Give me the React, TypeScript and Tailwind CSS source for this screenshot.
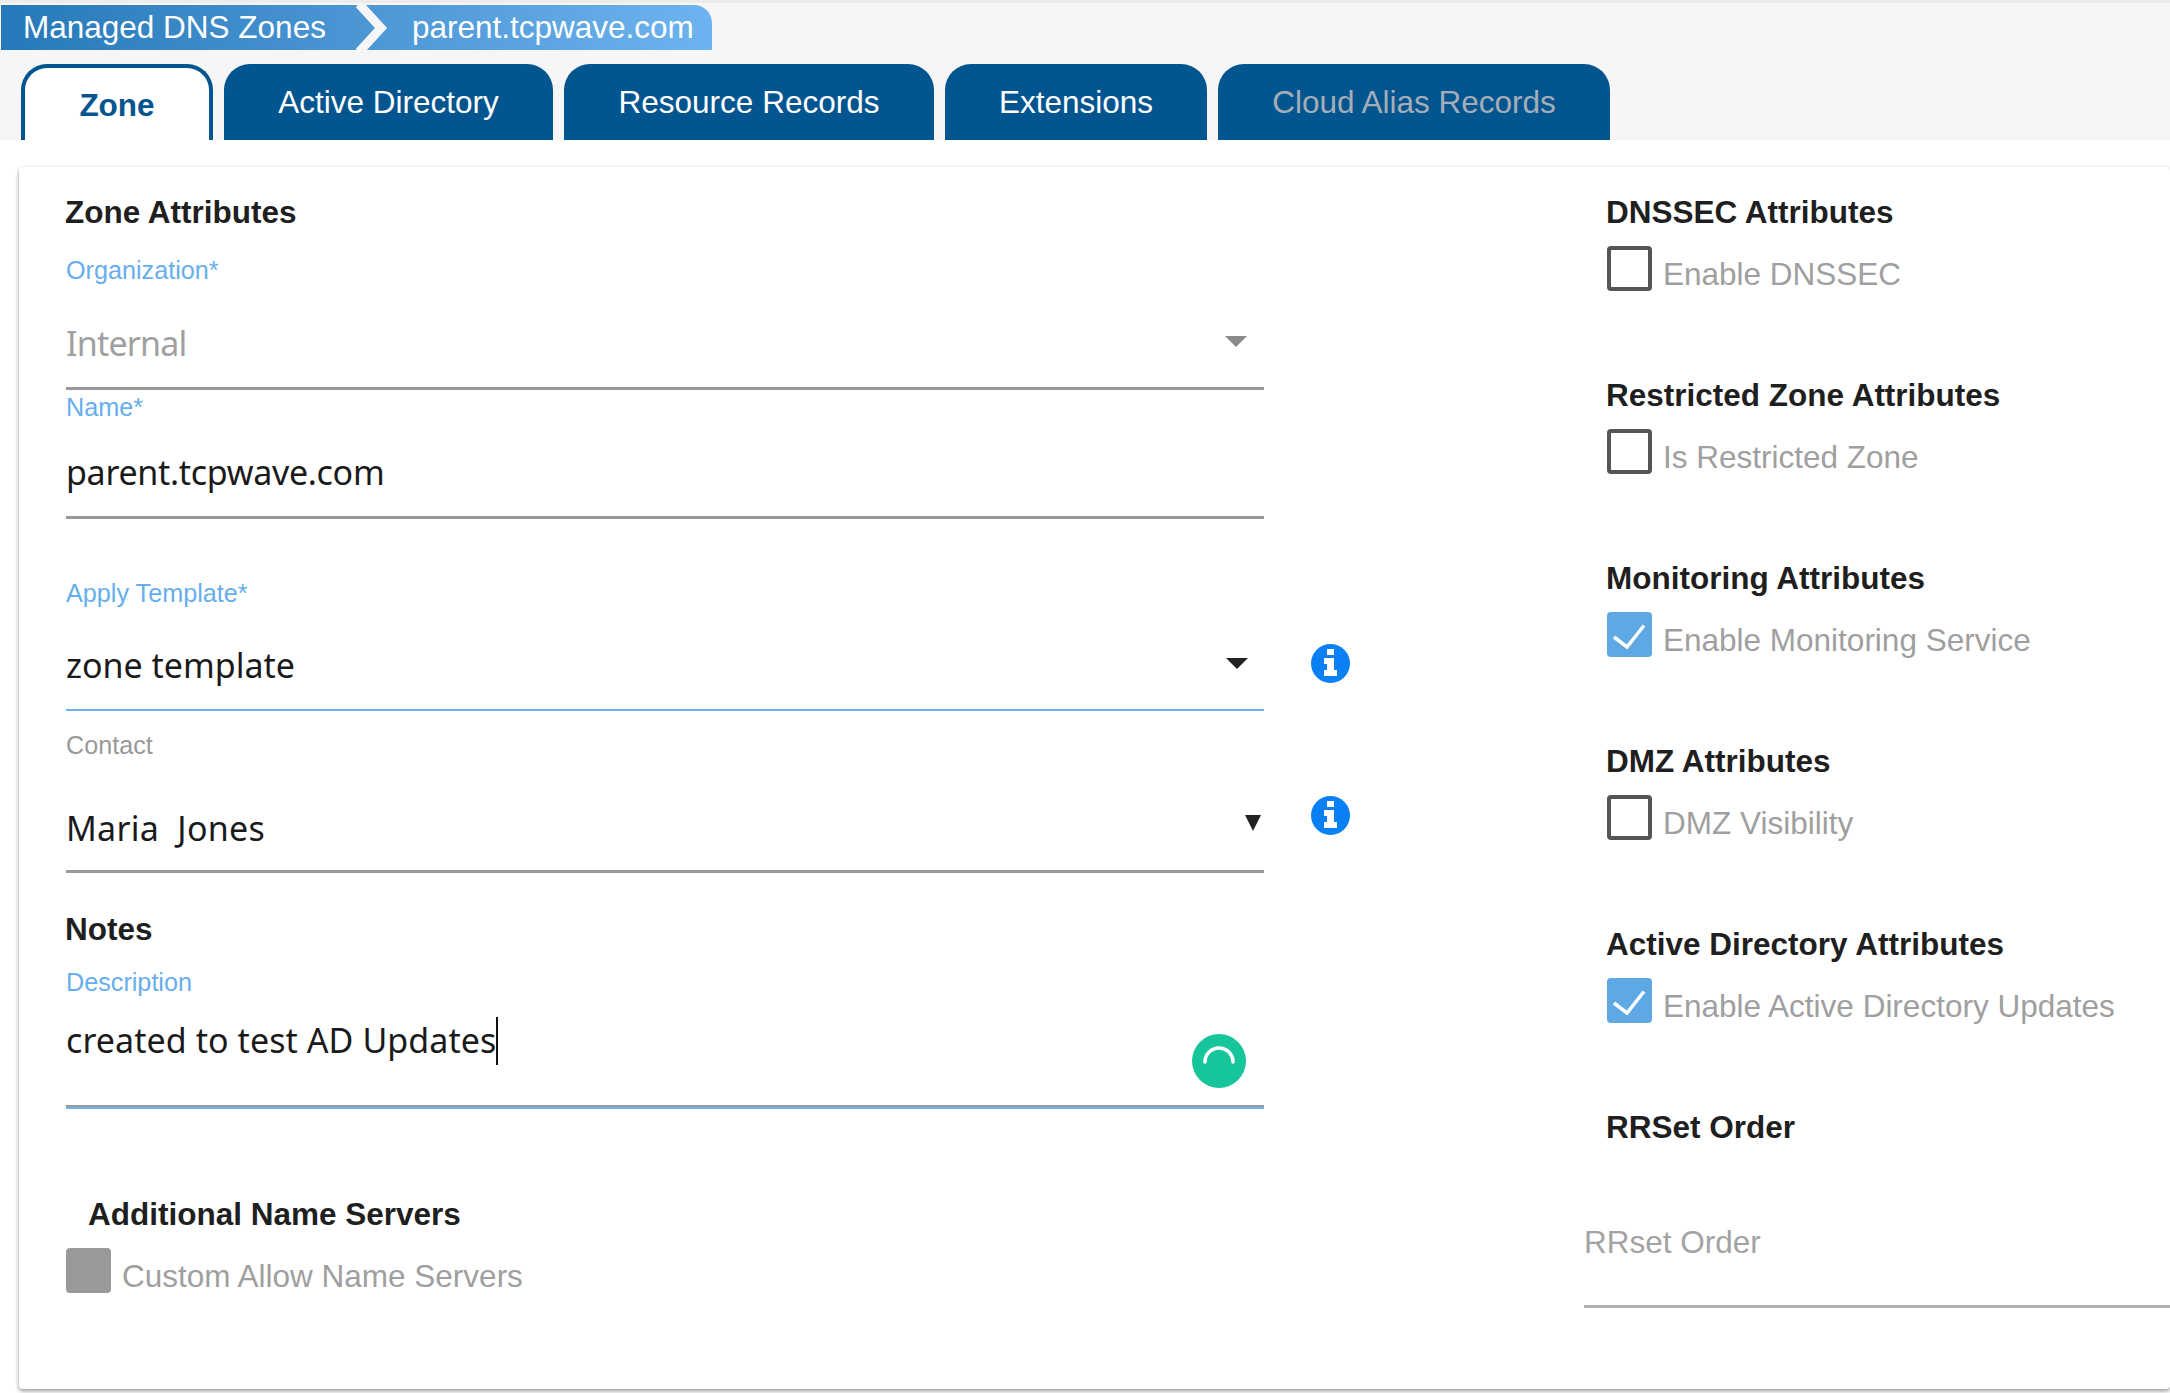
import type { ReactNode } from 'react';

const TABS = [
  { label: 'Active Directory', width: 'w-[329px]', color: 'text-white' },
  { label: 'Resource Records', width: 'w-[370px]', color: 'text-white' },
  { label: 'Extensions', width: 'w-[262px]', color: 'text-white' },
  { label: 'Cloud Alias Records', width: 'w-[392px]', color: 'text-[#a5adb8]' },
];

function Heading({ children, className = '' }: { children: ReactNode; className?: string }) {
  return <h3 className={`h-[36px] text-[31.5px] leading-[36px] font-bold text-[#1f1f1f] ${className}`}>{children}</h3>;
}

function Label({ children, muted = false }: { children: ReactNode; muted?: boolean }) {
  return (
    <label className={`block h-[30px] text-[25.2px] leading-[30px] ${muted ? 'text-[#999999]' : 'text-[#67aeec]'}`}>
      {children}
    </label>
  );
}

function Value({ children, muted = false, className = '' }: { children: ReactNode; muted?: boolean; className?: string }) {
  return (
    <span className={`font-['Noto_Sans',sans-serif] text-[34px] leading-[48px] ${muted ? 'text-[#a0a0a0]' : 'text-[#1a1a1a]'} ${className}`}>
      {children}
    </span>
  );
}

function InfoIcon({ className = '' }: { className?: string }) {
  return (
    <svg viewBox="0 0 39 39" className={`h-[39px] w-[39px] shrink-0 ${className}`}>
      <circle cx="19.5" cy="19.5" r="19.5" fill="#0a80f5" />
      <rect x="16" y="5" width="7" height="6" fill="#fff" />
      <path d="M13 14h10v12h3v6H13v-6h3v-6h-3z" fill="#fff" />
    </svg>
  );
}

function CheckRow({ label, state }: { label: string; state: 'off' | 'on' | 'disabled' }) {
  return (
    <div className="flex h-[45px] items-start">
      {state === 'off' && <span className="h-[45px] w-[45px] shrink-0 rounded-[4px] border-4 border-[#555555]" />}
      {state === 'disabled' && <span className="h-[45px] w-[45px] shrink-0 rounded-[4px] bg-[#999999]" />}
      {state === 'on' && (
        <span className="flex h-[45px] w-[45px] shrink-0 items-center justify-center rounded-[4px] bg-[#5ea8e4]">
          <svg viewBox="0 0 45 45" className="h-[45px] w-[45px]">
            <path d="M7 25l13 10 17-21.500" fill="none" stroke="#fff" strokeWidth="3.500" />
          </svg>
        </span>
      )}
      <span className="ml-[11px] mt-[10px] text-[31.5px] leading-[36px] whitespace-nowrap text-[#9f9f9f]">{label}</span>
    </div>
  );
}

function CheckSection({ title, label, state }: { title: string; label: string; state: 'off' | 'on' }) {
  return (
    <section className="mb-[86px]">
      <Heading className="ml-[22px]">{title}</Heading>
      <div className="ml-[23px] mt-[16px]">
        <CheckRow label={label} state={state} />
      </div>
    </section>
  );
}

export default function App() {
  return (
    <div className="h-[1393px] w-full overflow-hidden bg-white font-['Liberation_Sans',Arial,sans-serif]">
      {/* header strip */}
      <div className="h-[140px] border-t-[3px] border-[#ececec] bg-[#f6f6f6] pt-[2px]">
        <nav className="relative ml-[1px] flex h-[45px] w-[711px] items-center rounded-tr-[18px] bg-gradient-to-r from-[#2579b8] to-[#6db3ef] text-[31.5px] text-white">
          <span className="ml-[22px] whitespace-nowrap">Managed DNS Zones</span>
          <span className="ml-[86px] whitespace-nowrap">parent.tcpwave.com</span>
          <svg viewBox="0 0 34 50" className="absolute left-[354px] top-[-2px] h-[50px] w-[34px]">
            <path d="M4 1l22 24L4 49" fill="none" stroke="#f6f6f6" strokeWidth="9" />
          </svg>
        </nav>
        <div className="mt-[14px] flex h-[76px] pl-[21px]">
          <button className="h-[76px] w-[192px] rounded-t-[26px] border-x-[4px] border-t-[4px] border-[#02558f] bg-white pt-[4px] text-[31.5px] font-bold text-[#02558f]">
            Zone
          </button>
          {TABS.map((tab) => (
            <button
              key={tab.label}
              className={`ml-[11px] h-[76px] ${tab.width} rounded-t-[26px] bg-[#02558f] pt-[2px] text-[31.5px] ${tab.color}`}
            >
              {tab.label}
            </button>
          ))}
        </div>
      </div>

      {/* main card */}
      <div className="ml-[19px] mt-[27px] flex h-[1222px] rounded-[4px] bg-white shadow-[0_2px_4px_rgba(0,0,0,0.42)]">
        <div className="w-[1565px] shrink-0 pl-[47px] pt-[27px]">
          <Heading className="-ml-[1px]">Zone Attributes</Heading>

          <div className="mt-[25px] w-[1198px]">
            <Label>Organization*</Label>
            <div className="flex h-[105px] items-start justify-between border-b-[3px] border-[#999999] pr-[17px] pt-[34px]">
              <Value muted className="tracking-[-0.8px]">Internal</Value>
              <span className="mt-[17px] h-0 w-0 border-x-[11px] border-t-[11px] border-x-transparent border-t-[#8a8a8a]" />
            </div>
          </div>

          <div className="mt-[2px] w-[1198px]">
            <Label>Name*</Label>
            <div className="h-[97px] border-b-[3px] border-[#999999] pt-[26px]">
              <Value className="tracking-[-0.3px]">parent.tcpwave.com</Value>
            </div>
          </div>

          <div className="mt-[59px] flex items-start">
            <div className="w-[1198px]">
              <Label>Apply Template*</Label>
              <div className="flex h-[103px] items-start justify-between border-b-2 border-[#6db3ef] pr-[16px] pt-[33px]">
                <Value>zone template</Value>
                <span className="mt-[17px] h-0 w-0 border-x-[11px] border-t-[11px] border-x-transparent border-t-[#222222]" />
              </div>
            </div>
            <InfoIcon className="ml-[47px] mt-[66px]" />
          </div>

          <div className="mt-[19px] flex items-start">
            <div className="w-[1198px]">
              <Label muted>Contact</Label>
              <div className="flex h-[113px] items-start justify-between border-b-[3px] border-[#999999] pr-[3px] pt-[44px]">
                <Value className="tracking-[0.27px]">Maria&nbsp; Jones</Value>
                <span className="mt-[11px] h-0 w-0 border-x-[8px] border-t-[16px] border-x-transparent border-t-[#222222]" />
              </div>
            </div>
            <InfoIcon className="ml-[47px] mt-[66px]" />
          </div>

          <Heading className="-ml-[1px] mt-[38px]">Notes</Heading>

          <div className="mt-[20px] w-[1198px]">
            <Label>Description</Label>
            <div className="border-b-2 border-[#6db3ef]">
              <div className="relative h-[110px] border-b-2 border-[#999999] pt-[8px]">
                <Value className="tracking-[0.07px]">created to test AD Updates</Value>
                <span className="inline-block h-[48px] w-[2px] translate-y-[12px] bg-[#111111]" />
                {/* grammar checker badge sits over the textarea */}
                <span className="absolute left-[1126px] top-[37px] flex h-[54px] w-[54px] items-center justify-center rounded-full bg-[#17c59b]">
                  <svg viewBox="0 0 54 54" className="h-[54px] w-[54px]">
                    <path d="M13 28a14 14 0 0 1 28 0" fill="none" stroke="#fff" strokeWidth="3.500" strokeLinecap="round" />
                  </svg>
                </span>
              </div>
            </div>
          </div>

          <Heading className="ml-[22px] mt-[87px]">Additional Name Servers</Heading>
          <div className="mt-[16px]">
            <CheckRow label="Custom Allow Name Servers" state="disabled" />
          </div>
        </div>

        <div className="min-w-0 flex-1 pt-[27px]">
          <CheckSection title="DNSSEC Attributes" label="Enable DNSSEC" state="off" />
          <CheckSection title="Restricted Zone Attributes" label="Is Restricted Zone" state="off" />
          <CheckSection title="Monitoring Attributes" label="Enable Monitoring Service" state="on" />
          <CheckSection title="DMZ Attributes" label="DMZ Visibility" state="off" />
          <CheckSection title="Active Directory Attributes" label="Enable Active Directory Updates" state="on" />
          <Heading className="ml-[22px] mt-[1px]">RRSet Order</Heading>
          <div className="mt-[79px] h-[84px] border-b-[3px] border-[#b0b0b0] text-[31.5px] leading-[36px] text-[#a3a3a3]">
            RRset Order
          </div>
        </div>
      </div>
    </div>
  );
}
